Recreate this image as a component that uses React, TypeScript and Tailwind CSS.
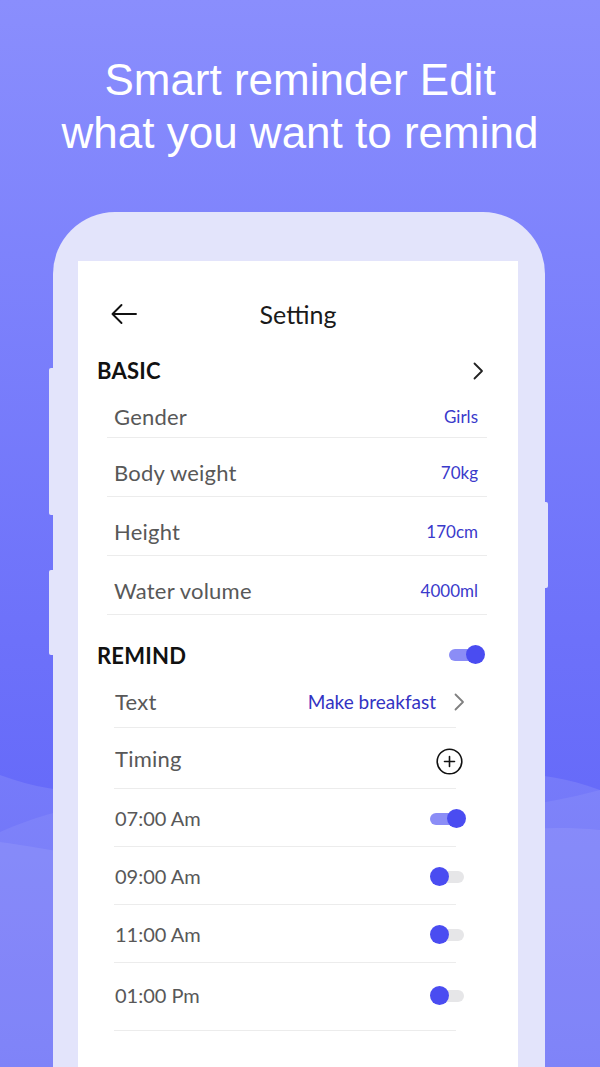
import React from "react";

interface RowProps {
    label: string;
    value: string;
    first?: boolean;
}

function BasicRow({label, value, first}: Readonly<RowProps>) {
    return (
        <div
            className={`flex items-end justify-between border-b border-[#ececec] pl-[7px] pr-[9px] ${first ? "h-[35px] pb-[8px]" : "h-[59px] pb-[11px]"}`}
        >
            <span className="text-[22px] leading-[24px] tracking-[0.01em] text-[#585858]">{label}</span>
            <span className="text-[17px] leading-[24px] text-[#3a3acb]">{value}</span>
        </div>
    );
}

function Toggle({on, big}: Readonly<{on: boolean; big?: boolean}>) {
    return (
        <div className={`relative flex items-center ${big ? "w-[36px] h-[20px]" : "w-[36px] h-[19px]"}`}>
            <div className={`h-[12px] w-[34px] rounded-full ${on ? "bg-[#8b8df6]" : "bg-[#e6e6e8]"}`}/>
            <div
                className={`absolute top-0 h-[19px] w-[19px] rounded-full bg-[#4a4cf1] ${on ? "right-0" : "left-0"}`}
            />
        </div>
    );
}

function Chevron({className}: Readonly<{className?: string}>) {
    return (
        <svg width="11" height="18" viewBox="0 0 11 18" fill="none" className={className}>
            <path d="M1.5 1.5L9 9l-7.5 7.5" stroke="currentColor" strokeWidth="1.8" strokeLinecap="round" strokeLinejoin="round"/>
        </svg>
    );
}

const times = [
    {time: "07:00 Am", on: true},
    {time: "09:00 Am", on: false},
    {time: "11:00 Am", on: false},
    {time: "01:00 Pm", on: false, last: true},
];

export default function App() {
    return (
        <div className="relative h-[1067px] w-full overflow-hidden bg-gradient-to-b from-[#8a8efd] via-[#6d71fa] via-60% to-[#5b5ff8]">
            {/* soft waves at the bottom */}
            <svg className="absolute inset-0" width="600" height="1067" viewBox="0 0 600 1067">
                <path d="M0 775 C120 820 220 760 330 770 C450 780 520 760 600 790 L600 1067 L0 1067Z" fill="#ffffff" fillOpacity="0.1"/>
                <path d="M0 832 C40 815 80 800 160 805 C300 812 450 830 600 790 L600 1067 L0 1067Z" fill="#ffffff" fillOpacity="0.07"/>
                <path d="M0 842 C60 850 140 870 260 860 C400 850 500 820 600 830 L600 1067 L0 1067Z" fill="#ffffff" fillOpacity="0.08"/>
            </svg>

            <h1
                className="relative pt-[53px] text-center text-[44px] leading-[53px] text-white"
                style={{fontFamily: '"Liberation Sans", Arial, sans-serif'}}
            >
                Smart reminder Edit
                <br/>
                what you want to remind
            </h1>

            <div className="relative ml-[53px] mt-[53px] h-[855px] w-[492px] rounded-t-[62px] bg-[#e3e4fb] pl-[25px] pr-[27px] pt-[49px]">
                <span className="absolute left-[-4px] top-[156px] h-[147px] w-[4px] rounded-l-[2px] bg-[#e3e4fb]"/>
                <span className="absolute left-[-4px] top-[358px] h-[85px] w-[4px] rounded-l-[2px] bg-[#e3e4fb]"/>
                <span className="absolute right-[-3px] top-[290px] h-[86px] w-[3px] rounded-r-[2px] bg-[#e3e4fb]"/>

                <div
                    className="h-full bg-white pt-[29px]"
                    style={{fontFamily: 'Lato, "Noto Sans", sans-serif'}}
                >
                    {/* header */}
                    <div className="grid h-[48px] grid-cols-[1fr_auto_1fr] items-center">
                        <div className="pl-[32px]">
                            <svg width="28" height="22" viewBox="0 0 28 22" fill="none">
                                <path d="M26 11H2.5M11.5 2L2.5 11l9 9" stroke="#111" strokeWidth="1.9" strokeLinecap="round" strokeLinejoin="round"/>
                            </svg>
                        </div>
                        <span className="text-[25px] leading-none text-[#1a1a1a]">Setting</span>
                        <div/>
                    </div>

                    {/* basic */}
                    <div className="flex h-[65px] items-center justify-between pl-[19px] pr-[34px]">
                        <span className="text-[22px] font-bold tracking-[0.01em] text-[#111]">BASIC</span>
                        <Chevron className="text-[#222]"/>
                    </div>
                    <div className="ml-[29px] mr-[31px]">
                        <BasicRow label="Gender" value="Girls" first/>
                        <BasicRow label="Body weight" value="70kg"/>
                        <BasicRow label="Height" value="170cm"/>
                        <BasicRow label="Water volume" value="4000ml"/>
                    </div>

                    {/* remind */}
                    <div className="flex h-[80px] items-center justify-between pl-[19px] pr-[33px]">
                        <span className="text-[22px] font-bold tracking-[0.01em] text-[#111]">REMIND</span>
                        <Toggle on big/>
                    </div>
                    <div className="ml-[36px] mr-[62px]">
                        <div className="flex h-[33px] items-end justify-between border-b border-[#ececec] pb-[13px] pl-[1px]">
                            <span className="text-[22px] leading-[24px] tracking-[0.01em] text-[#585858]">Text</span>
                            <div className="-mr-[9px] flex items-center gap-[18px]">
                                <span className="text-[19px] leading-[24px] text-[#3333c3]">Make breakfast</span>
                                <Chevron className="text-[#808080]"/>
                            </div>
                        </div>
                        <div className="flex h-[61px] items-end justify-between border-b border-[#ececec] pb-[17px] pl-[1px]">
                            <span className="text-[22px] leading-[24px] tracking-[0.01em] text-[#585858]">Timing</span>
                            <svg width="27" height="27" viewBox="0 0 27 27" fill="none" className="-mr-[7px] mb-[-4px]">
                                <circle cx="13.5" cy="13.5" r="12.3" stroke="#111" strokeWidth="1.6"/>
                                <path d="M13.5 8.5v10M8.5 13.5h10" stroke="#111" strokeWidth="1.6" strokeLinecap="round"/>
                            </svg>
                        </div>
                        {times.map((t) => (
                            <div
                                key={t.time}
                                className={`flex items-end justify-between border-b border-[#ececec] pl-[1px] ${t.last ? "h-[68px] pb-[23px]" : "h-[58px] pb-[16px]"}`}
                            >
                                <span className="text-[20px] leading-[24px] text-[#585858]">{t.time}</span>
                                <div className="-mr-[10px] mb-[2px]">
                                    <Toggle on={t.on}/>
                                </div>
                            </div>
                        ))}
                    </div>
                </div>
            </div>
        </div>
    );
}
